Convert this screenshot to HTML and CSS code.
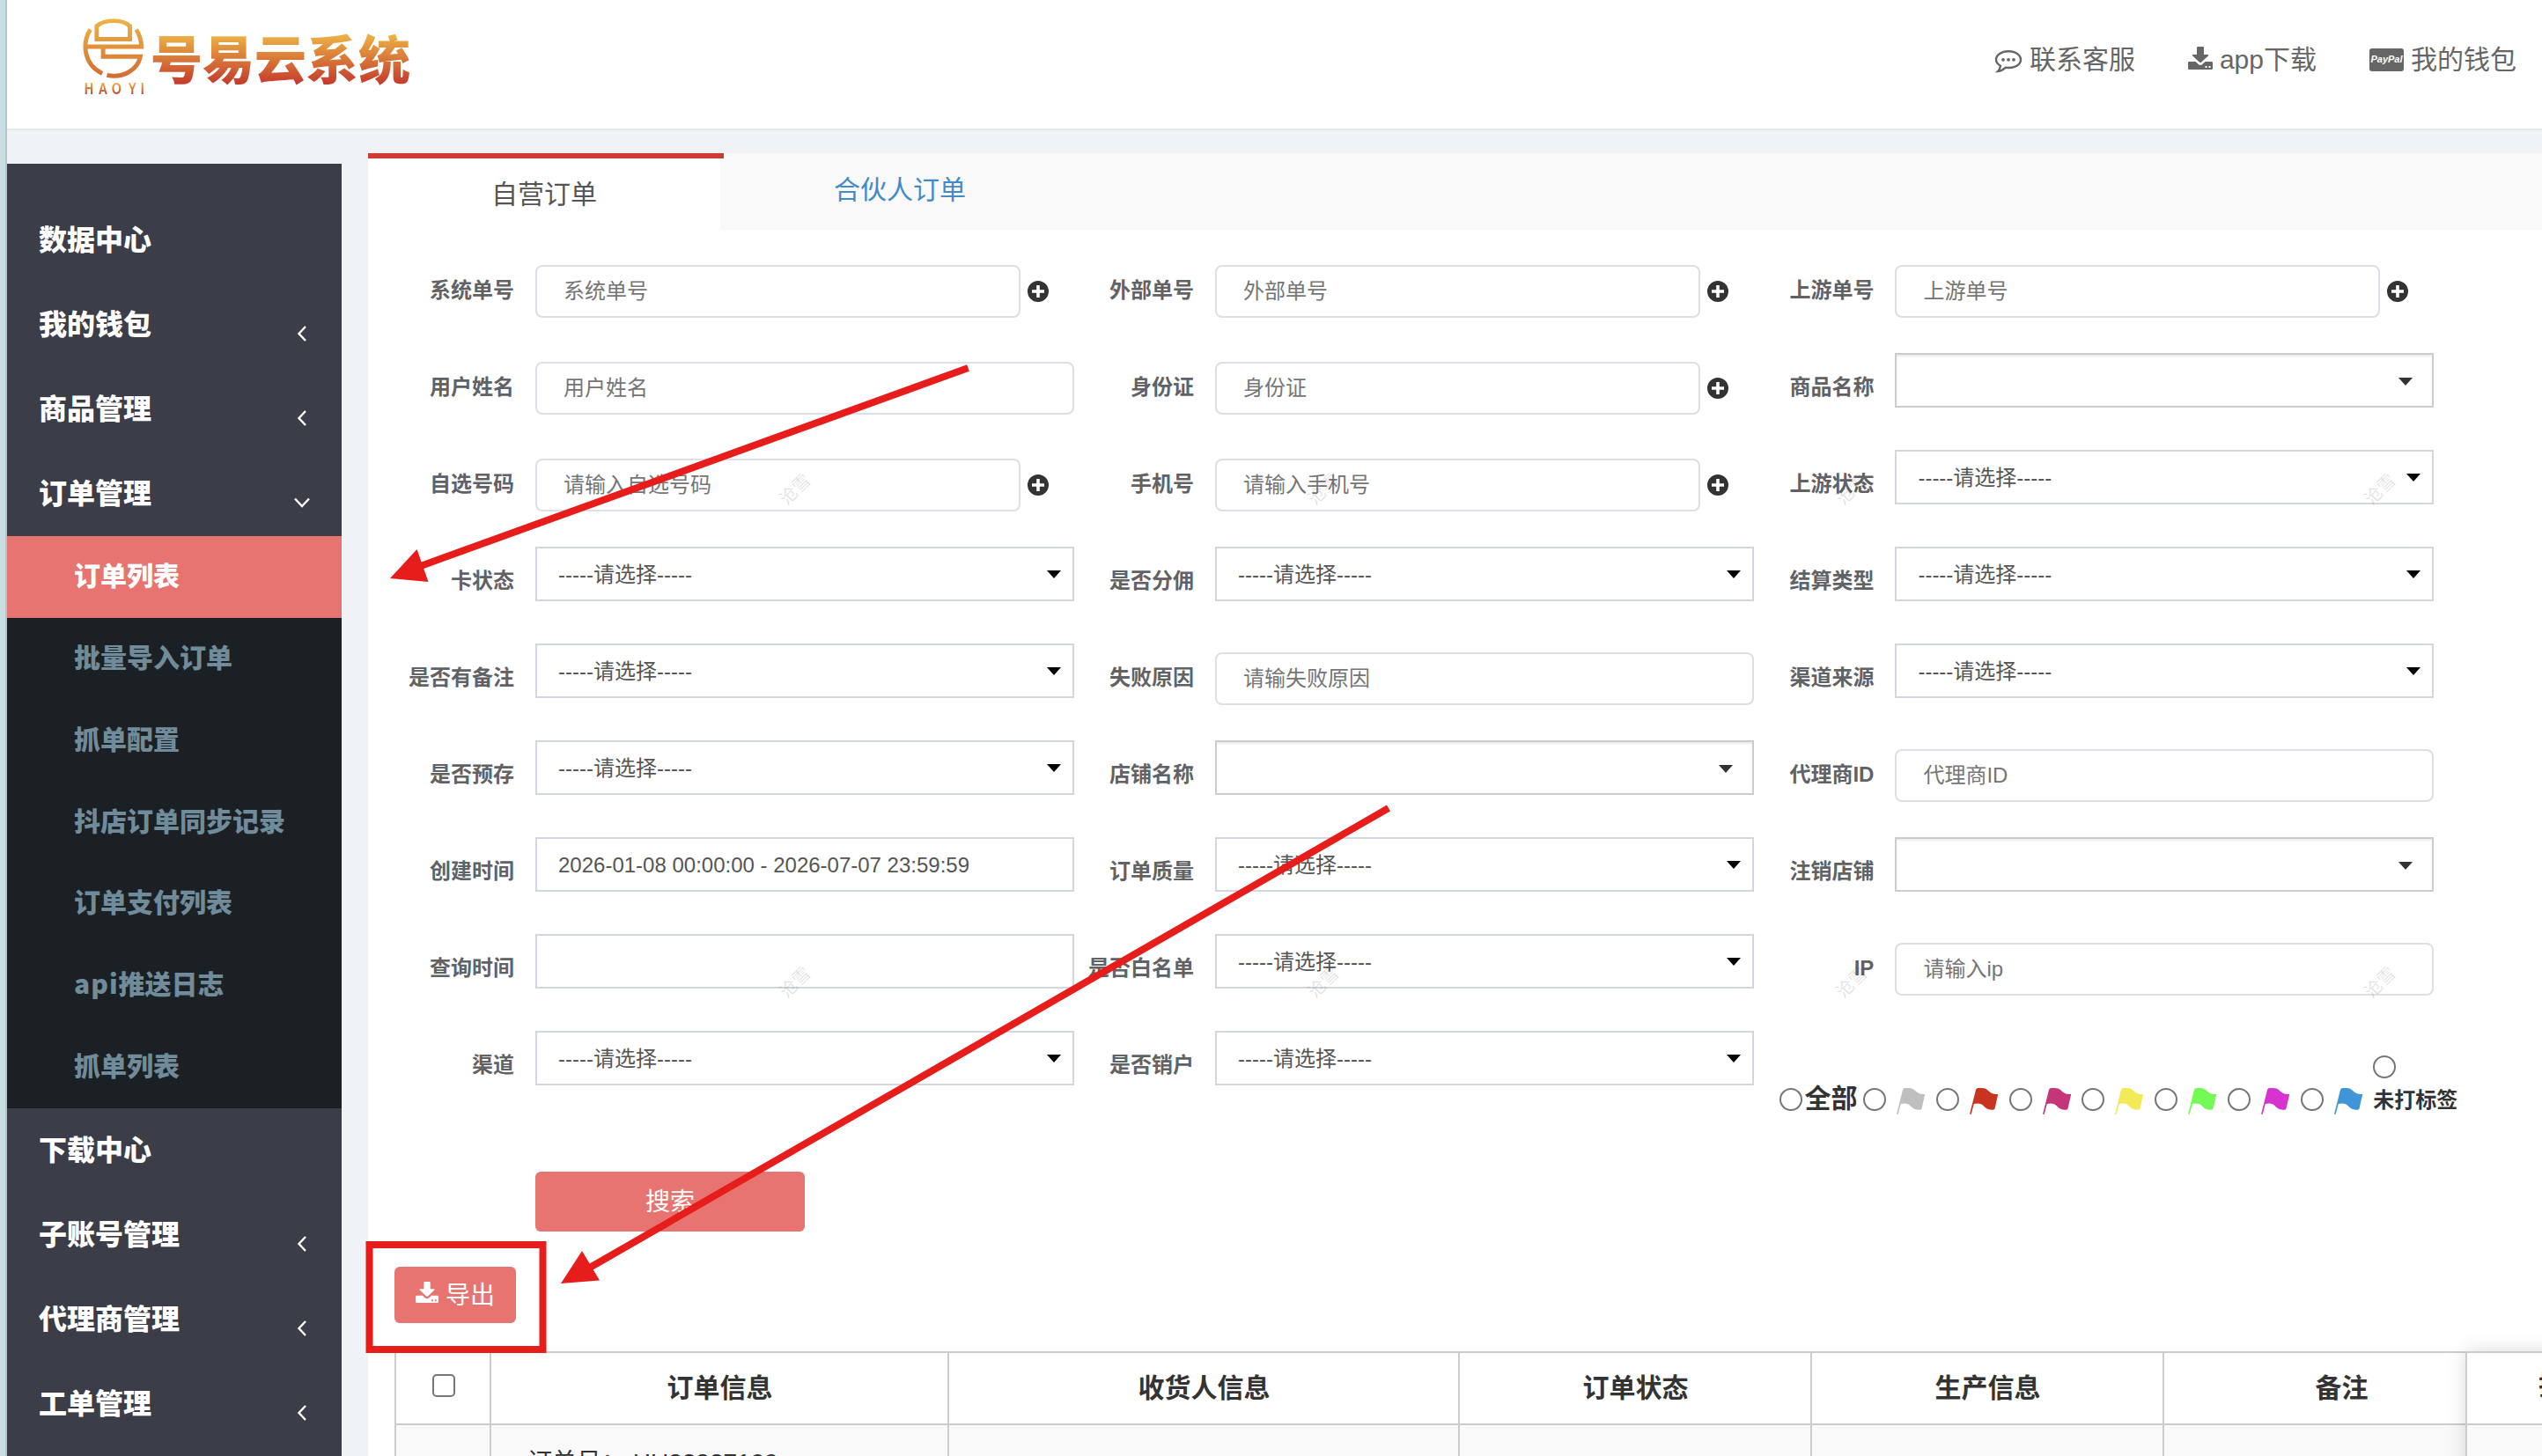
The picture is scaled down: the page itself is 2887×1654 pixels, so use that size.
FILE: index.html
```html
<!DOCTYPE html>
<html lang="zh-CN">
<head>
    <meta charset="UTF-8">
    <meta name="viewport" content="width=device-width, initial-scale=1.0">
    <title>号易云系统</title>
    <link rel="stylesheet" href="styles.css">
</head>
<body>
    <svg width="0" height="0" class="sprite">
        <defs>
            <linearGradient id="gold" gradientUnits="userSpaceOnUse" x1="0" y1="35" x2="0" y2="270">
                <stop offset="0" stop-color="#edb545"/>
                <stop offset="1" stop-color="#d0602f"/>
            </linearGradient>
        </defs>
        <symbol id="icon-download" viewBox="0 0 28 26">
            <path d="M11 0h6a1 1 0 0 1 1 1v8h4.5q1.2.2.5 1.300l-8 7.500q-1 .8-2 0l-8-7.500q-.7-1.100.5-1.300H10V1a1 1 0 0 1 1-1z"/>
            <path fill-rule="evenodd" d="M1.300 17H8.500l3.200 3q2.300 1.800 4.600 0l3.200-3h7.200Q28 17 28 18.300v6.400Q28 26 26.700 26H1.300Q0 26 0 24.700v-6.400Q0 17 1.300 17zM19.500 22v2h2v-2zM23.500 22v2h2v-2z"/>
        </symbol>
        <symbol id="icon-plus" viewBox="0 0 24 24">
            <path fill-rule="evenodd" d="M12 0a12 12 0 1 0 0 24a12 12 0 1 0 0-24zM10.200 5h3.600v5.200H19v3.600h-5.200V19h-3.600v-5.200H5v-3.600h5.200z"/>
        </symbol>
        <symbol id="icon-flag" viewBox="0 0 32 30">
            <path d="M0 29.800L7 2Q7.600 0 9.500 0H14C19.500.1 21 3.500 24 5.300C26.600 6.900 28.500 7 32.200 7L28.600 23Q28.300 24.500 26.500 24.700C18.500 25.300 17 20.400 13 18.300C10.500 17.200 7.500 17.400 4.800 18L1.700 29.800z"/>
        </symbol>
    </svg>

    <div class="edge"></div>
    <div class="page">
        <header class="header">
            <div class="logo">
                <div class="logo-mark">
                    <svg viewBox="103 34 212 206" width="70" height="68" fill="none" stroke="url(#gold)" stroke-width="15">
                        <path d="M151 105V60Q172 42 209 42T265 60V105zM129 72C99 120 107 194 170 223M287 72Q303 98 305 130M112 131H312M173 132V165H301C292 212 240 240 186 229"/>
                    </svg>
                    <span class="logo-sub"><i>H</i><i>A</i><i>O</i><i></i><i>Y</i><i>I</i></span>
                </div>
                <span class="logo-text">号易云系统</span>
            </div>
            <nav class="top-nav">
                <a><svg width="32" height="28" viewBox="0 0 32 28"><path fill="none" stroke="#666" stroke-width="2.400" d="M16 2.200C24 2.200 30 6.200 30 11.800S24 21 16 21Q14.300 21 13 20.700Q9 24.500 4 25Q6.500 22.500 7 18.800Q2 16 2 11.800C2 6.200 8 2.200 16 2.200z"/><g fill="#666"><circle cx="10" cy="11.800" r="1.900"/><circle cx="16" cy="11.800" r="1.900"/><circle cx="22" cy="11.800" r="1.900"/></g></svg>联系客服</a>
                <a><svg class="nav-download" width="28" height="26" fill="#666"><use href="#icon-download"/></svg>app下载</a>
                <a><span class="paypal">PayPal</span>我的钱包</a>
            </nav>
        </header>

        <div class="main">
            <aside class="sidebar">
                <div class="menu">数据中心</div>
                <div class="menu">我的钱包<svg class="arrow" viewBox="0 0 18 18"><path d="M13 1L5.500 9L13 17"/></svg></div>
                <div class="menu">商品管理<svg class="arrow" viewBox="0 0 18 18"><path d="M13 1L5.500 9L13 17"/></svg></div>
                <div class="menu">订单管理<svg class="arrow" viewBox="0 0 18 18"><path d="M1 4.500L9 13L17 4.500"/></svg></div>
                <div class="submenu">
                    <div class="active">订单列表</div>
                    <div>批量导入订单</div>
                    <div>抓单配置</div>
                    <div>抖店订单同步记录</div>
                    <div>订单支付列表</div>
                    <div><span class="latin">api</span>推送日志</div>
                    <div>抓单列表</div>
                </div>
                <div class="menu">下载中心</div>
                <div class="menu">子账号管理<svg class="arrow" viewBox="0 0 18 18"><path d="M13 1L5.500 9L13 17"/></svg></div>
                <div class="menu">代理商管理<svg class="arrow" viewBox="0 0 18 18"><path d="M13 1L5.500 9L13 17"/></svg></div>
                <div class="menu">工单管理<svg class="arrow" viewBox="0 0 18 18"><path d="M13 1L5.500 9L13 17"/></svg></div>
            </aside>

            <section class="content">
                <div class="tabs">
                    <div class="tab current">自营订单</div>
                    <div class="tab">合伙人订单</div>
                </div>

                <form class="search-form">
                    <div class="field"><label>系统单号</label><input class="short" type="text" placeholder="系统单号"><svg class="plus"><use href="#icon-plus"/></svg></div>
                    <div class="field"><label>外部单号</label><input class="short" type="text" placeholder="外部单号"><svg class="plus"><use href="#icon-plus"/></svg></div>
                    <div class="field"><label>上游单号</label><input class="short" type="text" placeholder="上游单号"><svg class="plus"><use href="#icon-plus"/></svg></div>

                    <div class="field"><label>用户姓名</label><input type="text" placeholder="用户姓名"></div>
                    <div class="field"><label>身份证</label><input class="short" type="text" placeholder="身份证"><svg class="plus"><use href="#icon-plus"/></svg></div>
                    <div class="field"><label>商品名称</label><div class="select chosen"></div></div>

                    <div class="field"><label>自选号码</label><input class="short" type="text" placeholder="请输入自选号码"><svg class="plus"><use href="#icon-plus"/></svg></div>
                    <div class="field"><label>手机号</label><input class="short" type="text" placeholder="请输入手机号"><svg class="plus"><use href="#icon-plus"/></svg></div>
                    <div class="field"><label>上游状态</label><div class="select">-----请选择-----</div></div>

                    <div class="field"><label>卡状态</label><div class="select">-----请选择-----</div></div>
                    <div class="field"><label>是否分佣</label><div class="select">-----请选择-----</div></div>
                    <div class="field"><label>结算类型</label><div class="select">-----请选择-----</div></div>

                    <div class="field"><label>是否有备注</label><div class="select">-----请选择-----</div></div>
                    <div class="field"><label>失败原因</label><input type="text" placeholder="请输失败原因"></div>
                    <div class="field"><label>渠道来源</label><div class="select">-----请选择-----</div></div>

                    <div class="field"><label>是否预存</label><div class="select">-----请选择-----</div></div>
                    <div class="field"><label>店铺名称</label><div class="select chosen"></div></div>
                    <div class="field"><label>代理商ID</label><input type="text" placeholder="代理商ID"></div>

                    <div class="field"><label>创建时间</label><div class="select date">2026-01-08 00:00:00 - 2026-07-07 23:59:59</div></div>
                    <div class="field"><label>订单质量</label><div class="select">-----请选择-----</div></div>
                    <div class="field"><label>注销店铺</label><div class="select chosen"></div></div>

                    <div class="field"><label>查询时间</label><div class="select date"></div></div>
                    <div class="field"><label>是否白名单</label><div class="select">-----请选择-----</div></div>
                    <div class="field"><label>IP</label><input type="text" placeholder="请输入ip"></div>

                    <div class="field"><label>渠道</label><div class="select">-----请选择-----</div></div>
                    <div class="field"><label>是否销户</label><div class="select">-----请选择-----</div></div>
                    <div class="flags">
                        <div class="flag-all"><input type="radio" name="flag"><b>全部</b></div>
                        <div class="flag"><input type="radio" name="flag"><svg fill="#bfbfbf"><use href="#icon-flag"/></svg></div>
                        <div class="flag"><input type="radio" name="flag"><svg fill="#c8341f"><use href="#icon-flag"/></svg></div>
                        <div class="flag"><input type="radio" name="flag"><svg fill="#c53678"><use href="#icon-flag"/></svg></div>
                        <div class="flag"><input type="radio" name="flag"><svg fill="#f3ea58"><use href="#icon-flag"/></svg></div>
                        <div class="flag"><input type="radio" name="flag"><svg fill="#73fa54"><use href="#icon-flag"/></svg></div>
                        <div class="flag"><input type="radio" name="flag"><svg fill="#d633cf"><use href="#icon-flag"/></svg></div>
                        <div class="flag"><input type="radio" name="flag"><svg fill="#4095d9"><use href="#icon-flag"/></svg></div>
                        <div class="flag-none"><input type="radio" name="flag"><b>未打标签</b></div>
                    </div>
                </form>

                <button class="btn btn-search" type="button">搜索</button>
                <button class="btn btn-export" type="button"><svg width="26" height="24" fill="#fff"><use href="#icon-download"/></svg>导出</button>

                <table class="orders">
                    <colgroup>
                        <col class="c-check"><col class="c-info"><col class="c-user"><col class="c-col"><col class="c-col"><col class="c-note">
                    </colgroup>
                    <tr><th><input type="checkbox"></th><th>订单信息</th><th>收货人信息</th><th>订单状态</th><th>生产信息</th><th>备注</th></tr>
                    <tr class="row"><td></td><td>订单号： HU22827199</td><td></td><td></td><td></td><td></td></tr>
                </table>
                <div class="fixed-col">
                    <div class="fixed-head">操作</div>
                    <div class="fixed-body"></div>
                </div>
            </section>
        </div>
    </div>

    <div class="marks">
        <span style="left:903px;top:556px">沧雪</span>
        <span style="left:1503px;top:556px">沧雪</span>
        <span style="left:2103px;top:556px">沧雪</span>
        <span style="left:2703px;top:556px">沧雪</span>
        <span style="left:903px;top:1116px">沧雪</span>
        <span style="left:1503px;top:1116px">沧雪</span>
        <span style="left:2103px;top:1116px">沧雪</span>
        <span style="left:2703px;top:1116px">沧雪</span>
    </div>
    <svg class="notes" viewBox="0 0 2887 1654">
        <g stroke="#e71d1c" stroke-width="8" fill="none">
            <path d="M1099.500 418L475 644"/>
            <path d="M1577 918L668 1441"/>
            <rect x="419.500" y="1414" width="197" height="119"/>
        </g>
        <path fill="#e71d1c" d="M443 657L473.500 624L486.500 661zM637 1458L661 1421L681 1454.500z"/>
    </svg>
</body>
</html>
```

FILE: styles.css
```css
* {
    box-sizing: border-box;
}
html {
    height: 100%;
    overflow: hidden;
}
body {
    margin: 0;
    display: flex;
    width: 2887px;
    height: 1654px;
    overflow: hidden;
    position: relative;
    background: #eff3f6;
    color: #333;
    font-family: "Liberation Sans", "Noto Sans CJK SC", sans-serif;
    font-size: 24px;
}
.sprite {
    position: absolute;
}
.edge {
    width: 8px;
    flex: none;
    background: #c9dee2;
    border-right: 2px solid #aec8cd;
}
.page {
    width: 2879px;
    height: 1654px;
    overflow: hidden;
}

/* header */
.header {
    height: 148px;
    display: flex;
    justify-content: space-between;
    background: #fff;
    border-bottom: 2px solid #e3e8eb;
}
.logo {
    display: flex;
    padding: 21px 0 0 86px;
}
.logo-mark {
    width: 72px;
}
.logo-mark svg {
    display: block;
}
.logo-sub {
    display: flex;
    justify-content: space-between;
    width: 70px;
    font-size: 19px;
    font-weight: bold;
    line-height: 20px;
    padding-top: 2px;
}
.logo-sub i {
    font-style: normal;
    transform: scaleX(.75);
    background: linear-gradient(#edb545 15%, #c43b2c 85%);
    -webkit-background-clip: text;
    color: transparent;
}
.logo-text {
    margin: -3px 0 0 5px;
    height: 94px;
    line-height: 94px;
    font-family: "Noto Sans CJK SC", sans-serif;
    font-weight: 900;
    font-size: 59px;
    background: linear-gradient(#edb545 22%, #c43b2c 82%);
    -webkit-background-clip: text;
    color: transparent;
}
.top-nav {
    display: flex;
    gap: 60px;
    padding-right: 29px;
    font-size: 30px;
    line-height: 136px;
    color: #666;
}
.top-nav a {
    display: flex;
    align-items: center;
    height: 136px;
    gap: 8px;
}
.top-nav svg {
    margin-top: 3px;
}
.top-nav .nav-download {
    margin-top: -4px;
}
.paypal {
    width: 39px;
    height: 26px;
    border-radius: 3px;
    background: #666;
    color: #fff;
    font-size: 11px;
    line-height: 25px;
    font-weight: bold;
    font-style: italic;
    text-align: center;
}

/* sidebar */
.main {
    display: flex;
}
.sidebar {
    width: 380px;
    height: 1468px;
    margin-top: 38px;
    padding-top: 39px;
    background: #3b3d48;
    color: #fff;
    font-family: "Noto Sans CJK SC", sans-serif;
    font-weight: 900;
}
.menu {
    height: 96px;
    line-height: 91px;
    padding: 0 36px;
    font-size: 32px;
    display: flex;
    justify-content: space-between;
}
.arrow {
    width: 18px;
    height: 18px;
    margin-top: 49px;
    fill: none;
    stroke: #fff;
    stroke-width: 2.4;
}
.submenu {
    background: #1b2024;
    color: #708b99;
    font-size: 30px;
}
.submenu div {
    height: 92.86px;
    line-height: 87px;
    padding-left: 76px;
}
.submenu .latin {
    letter-spacing: 1px;
}
.submenu .active {
    background: #e77471;
    color: #fff;
}

/* content */
.content {
    width: 2469px;
    height: 1480px;
    margin: 26px 0 0 30px;
    background: #fff;
    position: relative;
}
.tabs {
    display: flex;
    height: 87px;
    background: #f9f9f9;
}
.tab {
    width: 400px;
    font-size: 30px;
    line-height: 84px;
    text-align: center;
    color: #428bca;
}
.tab.current {
    width: 404px;
    line-height: 82px;
    color: #555;
    background: linear-gradient(90deg, #fff 400px, #f9f9f9 400px);
    border-top: 6px solid #cd3b33;
    padding-right: 4px;
}
.search-form {
    display: grid;
    grid-template-columns: 772px 772.4px 798px;
    grid-auto-rows: 110px;
    padding: 15px 0 0 30px;
}
.field {
    display: flex;
}
.field label {
    width: 136px;
    margin-right: 24px;
    text-align: right;
    line-height: 108px;
    font-weight: bold;
    color: #606266;
    white-space: nowrap;
}
.field input {
    width: 612px;
    height: 60px;
    margin: 25px 0 0;
    padding: 0 30px;
    border: 2px solid #dcdfe6;
    border-radius: 8px;
    font-family: inherit;
    font-size: 24px;
}
.field input.short {
    width: 551px;
}
.field input::placeholder {
    color: #757575;
}
.plus {
    width: 24px;
    height: 24px;
    margin: 43px 0 0 8px;
    fill: #333;
}
.select {
    width: 612px;
    height: 62px;
    margin-top: 15px;
    padding: 0 13px 0 24px;
    border: 2px solid #d2d6de;
    color: #555;
    line-height: 57px;
    display: flex;
    justify-content: space-between;
    align-items: center;
}
.select::after {
    content: "";
    border: 8px solid transparent;
    border-top: 9px solid #000;
    border-bottom: 0;
}
.chosen {
    border-color: #ccc;
    box-shadow: inset 0 2px 2px rgba(0, 0, 0, .075);
    padding-right: 22px;
    justify-content: flex-end;
}
.chosen::after {
    border-top-color: #333;
    margin-top: 3px;
}
.date::after {
    display: none;
}

/* flags */
input[type=radio],
input[type=checkbox] {
    width: 26px;
    height: 26px;
    margin: 0;
    appearance: none;
    border: 2px solid #767676;
    border-radius: 50%;
    background: #fff;
    flex: none;
}
input[type=checkbox] {
    border-radius: 5px;
}
.flags {
    display: flex;
    align-items: flex-end;
    padding: 0 0 4px 29px;
}
.flag-all {
    display: flex;
    flex: none;
    width: 95px;
    gap: 2px;
    font-size: 30px;
    line-height: 24px;
}
.flag {
    display: flex;
    flex: none;
    width: 82.7px;
    gap: 12px;
    height: 26px;
}
.flag svg {
    width: 32px;
    height: 30px;
    flex: none;
}
.flag-none {
    display: flex;
    flex-direction: column;
    gap: 12px;
    height: 63px;
    line-height: 26px;
    white-space: nowrap;
}

/* buttons */
.btn {
    display: flex;
    align-items: center;
    justify-content: center;
    border: 0;
    border-radius: 6px;
    background: #e77471;
    color: #fff;
    font-family: inherit;
    font-size: 28px;
    padding: 0 0 5px;
}
.btn-search {
    width: 306px;
    height: 68px;
    margin: 65px 0 0 190px;
}
.btn-export {
    width: 138px;
    height: 64px;
    margin: 40px 0 0 30px;
    gap: 8px;
}
.btn-export svg {
    margin-top: -2px;
}

/* table */
.orders {
    width: 2412px;
    margin: 32px 0 0 30px;
    border-collapse: collapse;
    table-layout: fixed;
    background: #fff;
}
.c-check { width: 108px; }
.c-info { width: 520px; }
.c-user { width: 580px; }
.c-col { width: 400px; }
.c-note { width: 404px; }
.orders th,
.orders td {
    border: 2px solid #ccc;
    padding: 0;
}
.orders th {
    height: 82px;
    padding: 0 0 7px 1px;
    font-size: 30px;
}
.orders th input {
    display: block;
    margin: 0 auto;
}
.orders .row {
    background: #f9f9f9;
}
.orders td {
    height: 120px;
    padding: 20px 0 0 41px;
    font-size: 28px;
    vertical-align: top;
}
.fixed-col {
    position: absolute;
    left: 2382px;
    top: 1361px;
    width: 226px;
    border: 2px solid #ccc;
    background: #fff;
    box-shadow: 0 0 20px rgba(0, 0, 0, .15);
}
.fixed-head {
    height: 80px;
    line-height: 73px;
    text-align: center;
    font-size: 30px;
    font-weight: bold;
}
.fixed-body {
    height: 120px;
    border-top: 2px solid #ccc;
    background: #f9f9f9;
}

/* watermark and annotations over the page */
.marks span {
    position: absolute;
    width: 60px;
    height: 30px;
    margin: -15px 0 0 -30px;
    line-height: 30px;
    text-align: center;
    font-size: 20px;
    color: rgba(0, 0, 0, .12);
    transform: rotate(-45deg);
}
.notes {
    position: absolute;
    left: 0;
    top: 0;
    width: 2887px;
    height: 1654px;
}
```
